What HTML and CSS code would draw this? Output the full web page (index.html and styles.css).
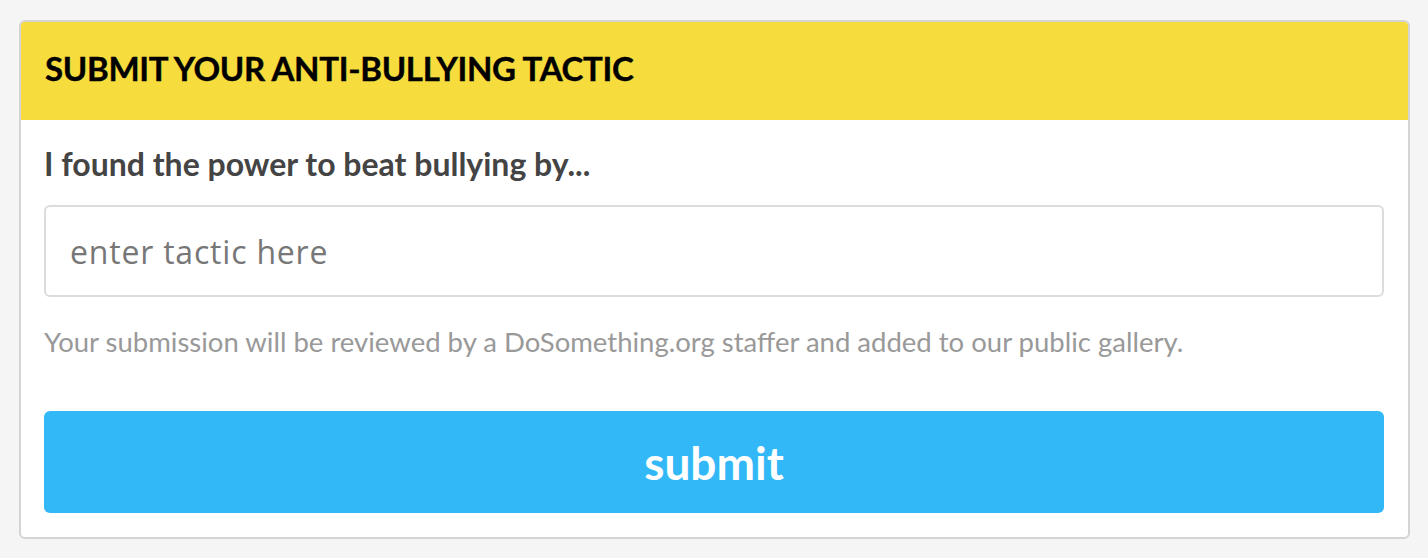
FILE: index.html
```html
<!DOCTYPE html>
<html lang="en">
<head>
<meta charset="utf-8">
<title>Submit your anti-bullying tactic</title>
<link rel="stylesheet" href="styles.css">
</head>
<body>
<div class="page">
  <form class="card">
    <div class="card-header">
      <h2 class="card-title">SUBMIT YOUR ANTI-BULLYING TACTIC</h2>
    </div>
    <div class="card-body">
      <label class="field-label" for="tactic">I found the power to beat bullying by...</label>
      <input class="field-input" id="tactic" type="text" placeholder="enter tactic here">
      <p class="help-text">Your submission will be reviewed by a DoSomething.org staffer and added to our public gallery.</p>
      <button class="submit-btn" type="button">submit</button>
    </div>
  </form>
</div>
</body>
</html>
```

FILE: styles.css
```css
html, body {
  margin: 0;
  padding: 0;
  background: #f5f5f5;
}

.page {
  padding: 20px 18px 21px 19px;
  font-family: Lato, "Open Sans", sans-serif;
}

.card {
  display: flex;
  flex-direction: column;
  background: #ffffff;
  border: 2px solid #d4d4d4;
  border-radius: 6px;
  overflow: hidden;
}

.card-header {
  height: 98px;
  background: #f7dc3d;
  display: flex;
  align-items: center;
  padding: 0 24px;
}

.card-title {
  margin: 0;
  font-size: 33px;
  font-weight: 700;
  color: #000;
  letter-spacing: -0.3px;
  line-height: 1;
  position: relative;
  top: -3px;
  -webkit-text-stroke: 0.4px #000;
}

.card-body {
  display: flex;
  flex-direction: column;
  padding: 26px 24px 24px 23px;
}

.field-label {
  font-size: 32px;
  font-weight: 700;
  color: #444;
  line-height: 36px;
  letter-spacing: 0;
}

.field-input {
  margin-top: 23px;
  height: 92px;
  box-sizing: border-box;
  border: 2px solid #dcdcdc;
  border-radius: 6px;
  padding: 0 24px;
  font-family: "Open Sans", Lato, sans-serif;
  font-size: 32px;
  color: #333;
  outline: none;
  letter-spacing: 0.8px;
}

.field-input::placeholder {
  color: #777;
}

.help-text {
  margin: 27px 0 0;
  font-size: 27.5px;
  color: #999;
  line-height: 36px;
}

.submit-btn {
  margin-top: 51px;
  height: 102px;
  border: 0;
  border-radius: 6px;
  background: #32b8f6;
  color: #fff;
  font-family: Lato, "Open Sans", sans-serif;
  font-size: 46px;
  font-weight: 700;
  cursor: pointer;
  padding: 0;
}
```
